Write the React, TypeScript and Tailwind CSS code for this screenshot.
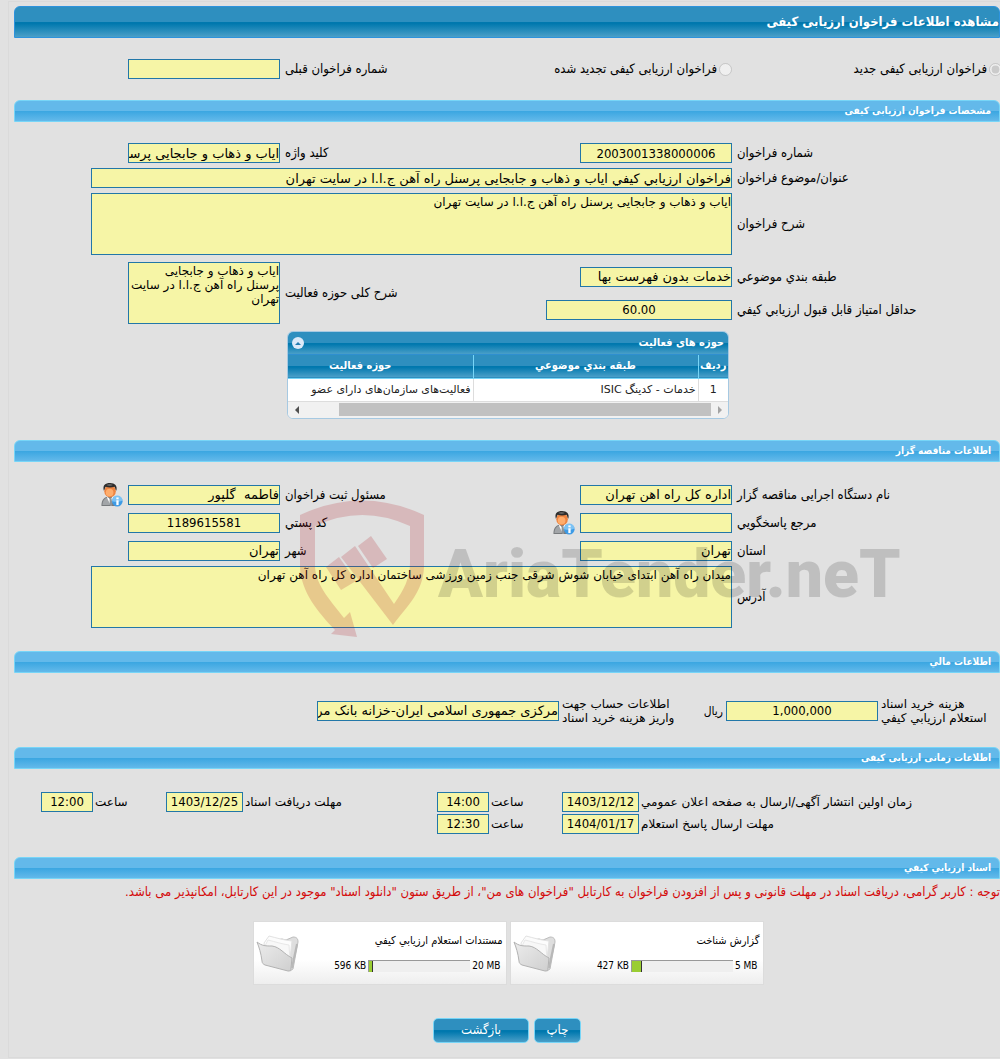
import { useId } from 'react';
import clsx from 'clsx';

const blueBar = 'bg-[linear-gradient(#2e8fbf_0%,#2e8fbf_50%,#0078ae_50%,#0078ae_55%,#4a9fc8_100%)]';
const wideFont = "font-['DejaVu_Sans',sans-serif]";
const condensedFont = "font-['DejaVu_Sans_Condensed','DejaVu_Sans',sans-serif]";

const activities = [
  { id: 1, category: 'خدمات - كدينگ ISIC', area: 'فعاليت‌هاى سازمان‌هاى داراى عضو' },
];

const documents = [
  { title: 'گزارش شناخت', used: '427 KB', max: '5 MB', percent: 10 },
  { title: 'مستندات استعلام ارزيابي کيفي', used: '596 KB', max: '20 MB', percent: 4 },
];

type FieldProps = {
  label: string;
  value?: string;
  width?: string;
  center?: boolean;
  person?: boolean;
  span?: string;
};

function PersonIcon() {
  return (
    <svg viewBox="0 0 24 25" className="h-6 w-6 shrink-0" aria-hidden="true">
      <path d="M1 24c0-6 2-9 7-10h4c5 1 6 4 6 10z" fill="#777a7d" />
      <path d="M2 23c0-4 2-7 5-8l4 8z" fill="#a2a5a8" />
      <path d="M7 14l3 3 3-3 1 2-3 8-4-8z" fill="#fff" />
      <path d="M9.500 16h2l1 7h-3z" fill="#8e9499" />
      <ellipse cx="10" cy="8.500" rx="6" ry="6.500" fill="#ee8440" />
      <ellipse cx="9.500" cy="10" rx="4" ry="4" fill="#ffad6c" />
      <path d="M3.500 8C2 2 5 0 10 0s8 3 6.500 8c-1-1-1-3-2-4-3 1-6 1-9 0-1 1-1 3-2 4z" fill="#2c2c2c" />
      <path d="M6 2c2-1 5-1 7 0-2 1-5 1-7 0z" fill="#777" />
      <circle cx="17.500" cy="19" r="5.500" fill="#3d9be6" />
      <path d="M12 19a5.500 5.500 0 0 1 11-1c-3 2-7 2-11 1z" fill="#7cc2f4" />
      <rect x="16.500" y="18" width="2.400" height="5" fill="#fff" />
      <rect x="16.500" y="15" width="2.400" height="2" fill="#fff" />
    </svg>
  );
}

function FolderIcon() {
  return (
    <svg viewBox="0 0 44 38" className="h-[38px] w-11 shrink-0" aria-hidden="true">
      <defs>
        <linearGradient id="folder" x1="0" y1="0" x2="1" y2="1">
          <stop offset="0" stopColor="#ececec" />
          <stop offset="1" stopColor="#cfcfcf" />
        </linearGradient>
      </defs>
      <path d="M9 8l17-3 4 1 7-3c4 0 5 2 5 5l-5 27-3 2z" fill="#dedede" stroke="#bdbdbd" />
      <path d="M8 9l5-7c8 2 14 4 23 5l-2 18-24-6z" fill="#fcfcfc" stroke="#e2e2e2" />
      <path d="M9 12l3-6c8 2 14 4 21 5l1 16-24-6z" fill="#f8f8f8" stroke="#e8e8e8" />
      <path d="M1 8c5 4 9 4 15 4 8 1 12 8 20 12l-1 10c0 3-1 3-3 3L9 31c-2-1-3-2-3-4C5 19 3 13 1 8z" fill="url(#folder)" stroke="#b2b2b2" />
      <path d="M36 34l2-10 3-14" stroke="#b8b8b8" strokeWidth="2" fill="none" />
    </svg>
  );
}

function TextBox({ id, value, width, center }: { id?: string; value?: string; width: string; center?: boolean }) {
  return (
    <input
      id={id}
      readOnly
      defaultValue={value}
      className={clsx(
        'h-5 shrink-0 border border-[#2277a8] bg-[#f6f5a6] text-[13px] leading-4 text-black outline-none',
        width,
        center ? clsx('text-center', condensedFont) : wideFont
      )}
    />
  );
}

function Field({ label, value, width = 'w-[152px]', center, person, span }: FieldProps) {
  const id = useId();
  return (
    <>
      <label htmlFor={id} className="text-left">{label}</label>
      <div className={clsx('flex items-center gap-1', span)}>
        <TextBox id={id} value={value} width={width} center={center} />
        {person && <PersonIcon />}
      </div>
    </>
  );
}

function Area({ label, value, width, span, row }: FieldProps & { row?: string }) {
  const id = useId();
  return (
    <>
      <label htmlFor={id} className={clsx('text-left', row)}>{label}</label>
      <textarea
        id={id}
        readOnly
        defaultValue={value}
        className={clsx('block h-[62px] resize-none overflow-hidden border border-[#2277a8] bg-[#f6f5a6] pt-px text-xs leading-[14px] text-black outline-none', wideFont, width, span, row)}
      />
    </>
  );
}

function SectionBar({ children }: { children: string }) {
  return (
    <h2 className={clsx('h-[22px] rounded-t-md border border-[#77d5f7] bg-[linear-gradient(#63b9ea_0%,#63b9ea_50%,#3aa6e1_50%,#63b9ea_100%)] px-2 text-[10px] leading-5 font-bold text-white', condensedFont)}>
      {children}
    </h2>
  );
}

const formGrid = clsx('grid grid-cols-[263px_186px_minmax(0,1fr)_266px] items-center gap-x-[5px] text-[13px] leading-[14px]', condensedFont);
const timeGrid = 'grid grid-cols-[359px_77px_69px_52px_minmax(0,1fr)_77px_69px_79px] items-center gap-x-0.5';

function ActivityTable() {
  return (
    <div className="mr-[271px] mt-[7px] w-[442px] overflow-hidden rounded-md border border-[#a6c9e2] bg-white">
      <div className={clsx('flex h-[23px] items-center justify-between border-b border-[#2f8fd0] px-1', blueBar, condensedFont)}>
        <h3 className="text-[11px] font-bold text-white">حوزه هاى فعاليت</h3>
        <button type="button" aria-label="بستن جدول" className="flex size-3 items-center justify-center rounded-full bg-[#dbe9f8]">
          <svg viewBox="0 0 8 4" className="h-[3px] w-1.5"><path d="M0 4l4-4 4 4z" fill="#217bb0" /></svg>
        </button>
      </div>
      <div className="overflow-hidden">
        <table className="w-[480px] table-fixed border-collapse">
          <colgroup>
            <col className="w-[30px]" />
            <col className="w-[225px]" />
            <col className="w-[225px]" />
          </colgroup>
          <thead>
            <tr className={clsx('h-[23px] border-b border-[#77d5f7] text-[11px] leading-4 text-white', blueBar, condensedFont)}>
              <th className="border-l border-[#77d5f7] p-0">رديف</th>
              <th className="border-l border-[#77d5f7] p-0">طبقه بندي موضوعي</th>
              <th className="p-0">حوزه فعاليت</th>
            </tr>
          </thead>
          <tbody>
            {activities.map((item) => (
              <tr key={item.id} className="h-[23px] border-b border-[#ddd] text-[11px] leading-4 text-[#222]">
                <td className="border-l border-[#ddd] p-0 text-center">{item.id}</td>
                <td className="border-l border-[#ddd] px-0.5 py-0">{item.category}</td>
                <td className="px-0.5 py-0">{item.area}</td>
              </tr>
            ))}
          </tbody>
        </table>
      </div>
      <div className="flex h-4 items-center bg-[#f1f1f1]">
        <button type="button" aria-label="راست" className="flex h-full w-[17px] items-center justify-center">
          <svg viewBox="0 0 4 8" className="h-2 w-1"><path d="M0 0l4 4-4 4z" fill="#a3a3a3" /></svg>
        </button>
        <div className="h-[13px] w-[372px] bg-[#c1c1c1]" />
        <div className="flex-1" />
        <button type="button" aria-label="چپ" className="flex h-full w-[17px] items-center justify-center">
          <svg viewBox="0 0 4 8" className="h-2 w-1"><path d="M4 0L0 4l4 4z" fill="#505050" /></svg>
        </button>
      </div>
    </div>
  );
}

function Watermark() {
  return (
    <div dir="ltr" className="pointer-events-none absolute top-[60px] left-[286px] flex items-start gap-3" aria-hidden="true">
      <svg viewBox="0 0 126 138" className="h-[138px] w-[126px] shrink-0 opacity-20">
        <g fill="#b01e28">
          <path d="M0 15Q62-14 124 15V67C123 92 108 105 93 125L41 57 55 46 94 104C104 90 110 78 110 63V26Q62 4 15 26V67C16 86 32 102 44 118L50 112 57 137 31 134 35 130C18 112 1 92 0 67z" />
          <path d="M26 67L39 57 56 81 41 90z" />
          <path d="M58 46L71 36 87 59 73 68z" />
        </g>
      </svg>
      <span className="font-['Roboto',sans-serif] text-[66px] leading-[150px] font-black text-black/15">AriaTender.neT</span>
    </div>
  );
}

export default function App() {
  return (
    <div dir="rtl" className={clsx('min-h-[1059px] overflow-hidden bg-[#e1e1e1] pl-2 text-xs leading-[14px] text-black', wideFont)}>
      <main className="mt-px border-y border-l border-[#dadada] pt-1 pb-[14px] pl-[5px]">
        <h1 className={clsx('h-8 rounded-t-md border border-[#2d93dd] text-[13px] leading-[30px] font-bold text-white', blueBar, condensedFont)}>
          مشاهده اطلاعات فراخوان ارزیابی کیفی
        </h1>

        <div className={clsx(formGrid, 'py-[21px]')}>
          <label className="-mr-0.5 flex items-center gap-0.5">
            <input type="radio" name="kind" disabled defaultChecked className="size-[13px]" />
            فراخوان ارزیابی کیفی جدید
          </label>
          <label className="flex items-center gap-0.5 whitespace-nowrap">
            <input type="radio" name="kind" disabled className="size-[13px]" />
            فراخوان ارزیابی کیفی تجدید شده
          </label>
          <Field label="شماره فراخوان قبلی" />
        </div>

        <SectionBar>مشخصات فراخوان ارزیابی کیفی</SectionBar>
        <div className={clsx(formGrid, 'gap-y-[5px] pt-[21px]')}>
          <Field label="شماره فراخوان" value="2003001338000006" center />
          <Field label="کلید واژه" value="ایاب و ذهاب و جابجایی پرسنل راه آهن" />
          <Field label="عنوان/موضوع فراخوان" value="فراخوان ارزيابي کيفي ایاب و ذهاب و جابجایی پرسنل راه آهن ج.ا.ا در سایت تهران" width="w-[641px]" span="col-span-3" />
          <Area label="شرح فراخوان" value="ایاب و ذهاب و جابجایی پرسنل راه آهن ج.ا.ا در سایت تهران" width="w-[641px]" span="col-span-3" />
        </div>
        <div className={clsx(formGrid, 'gap-y-1 pt-[7px]')}>
          <Field label="طبقه بندي موضوعي" value="خدمات بدون فهرست بها" />
          <Area label="شرح کلی حوزه فعالیت" value="ایاب و ذهاب و جابجایی پرسنل راه آهن ج.ا.ا در سایت تهران" width="w-[152px]" row="row-span-2" />
          <Field label="حداقل امتیاز قابل قبول ارزیابي کیفي" value="60.00" width="w-[186px]" center />
        </div>
        <ActivityTable />

        <div className="relative mt-[21px]">
          <SectionBar>اطلاعات مناقصه گزار</SectionBar>
          <div className={clsx(formGrid, 'auto-rows-[minmax(24px,auto)] gap-y-1 pt-[21px]')}>
            <Field label="نام دستگاه اجرایی مناقصه گزار" value="اداره کل راه اهن تهران" />
            <Field label="مسئول ثبت فراخوان" value="فاطمه  گلپور" person />
            <Field label="مرجع پاسخگویي" person />
            <Field label="کد پستي" value="1189615581" center />
            <Field label="استان" value="تهران" />
            <Field label="شهر" value="تهران" />
          </div>
          <div className={clsx(formGrid, 'pt-[3px]')}>
            <Area label="آدرس" value="میدان راه آهن ابتدای خیابان شوش شرقی جنب زمین ورزشی ساختمان اداره کل راه آهن تهران" width="w-[641px]" span="col-span-3" />
          </div>
          <Watermark />
        </div>

        <div className="mt-[23px]">
          <SectionBar>اطلاعات مالي</SectionBar>
          <div className="flex items-center pt-6 pb-[22px]">
            <label htmlFor="fee" className="w-[119px] pl-0 text-left whitespace-nowrap">
              <span className="inline-block text-right">هزینه خرید اسناد</span>
              <br />
              <span>استعلام ارزیابي کیفي</span>
            </label>
            <div className="mr-[3px] flex w-[200px] items-center gap-[3px]">
              <TextBox id="fee" value="1,000,000" width="w-[152px]" center />
              <span className={condensedFont}>ریال</span>
            </div>
            <label htmlFor="account" className="w-[116px] text-left whitespace-nowrap">
              اطلاعات حساب جهت
              <br />
              واریز هزینه خرید اسناد
            </label>
            <div className="mr-[3px]">
              <TextBox id="account" value="مرکزی جمهوری اسلامی ایران-خزانه بانک مرکزی" width="w-[242px]" />
            </div>
          </div>
        </div>

        <SectionBar>اطلاعات زمانی ارزیابی کیفی</SectionBar>
        <div className={clsx(timeGrid, 'gap-y-0.5 pt-[23px] pb-[23px]')}>
          <Field label="زمان اولین انتشار آگهی/ارسال به صفحه اعلان عمومي" value="1403/12/12" width="w-[77px]" center />
          <Field label="ساعت" value="14:00" width="w-[52px]" center />
          <Field label="مهلت دریافت اسناد" value="1403/12/25" width="w-[77px]" center />
          <Field label="ساعت" value="12:00" width="w-[52px]" center />
          <Field label="مهلت ارسال پاسخ استعلام" value="1404/01/17" width="w-[77px]" center />
          <Field label="ساعت" value="12:30" width="w-[52px]" center />
        </div>

        <SectionBar>اسناد ارزيابي کيفي</SectionBar>
        <p className={clsx('pt-[5px] text-[13px] leading-4 whitespace-nowrap text-[#d40a0a]', condensedFont)}>
          توجه : کاربر گرامی، دریافت اسناد در مهلت قانونی و پس از افزودن فراخوان به کارتابل "فراخوان های من"، از طریق ستون "دانلود اسناد" موجود در این کارتابل، امکانپذیر می باشد.
        </p>

        <div className={clsx('flex justify-center gap-[3px] pt-[21px] pl-0.5', condensedFont)}>
          {documents.map((doc) => (
            <div key={doc.title} className="flex h-16 w-[254px] items-center border border-[#dcdcdc] bg-[linear-gradient(#ffffff_0%,#ffffff_60%,#eeeeee_100%)] pr-[3px] pl-0.5">
              <div className="flex-1 text-[11px]">
                <h3>{doc.title}</h3>
                <div className="mt-3 flex items-center gap-0.5 px-0.5 text-[10px] leading-3">
                  <span dir="ltr">{doc.max}</span>
                  <div dir="ltr" className="h-3 w-[102px] border-t border-l border-[#999] bg-[#efefef]">
                    <div className="h-full border-r border-[#333] bg-[#9acd32]" style={{ width: `${doc.percent}%` }} />
                  </div>
                  <span dir="ltr">{doc.used}</span>
                </div>
              </div>
              <FolderIcon />
            </div>
          ))}
        </div>

        <div className={clsx('flex justify-center gap-[5px] pt-[33px] text-[13px] text-white', condensedFont)}>
          <button type="button" className={clsx('h-[25px] w-[47px] rounded-[5px] border border-[#77d5f7]', blueBar)}>چاپ</button>
          <button type="button" className={clsx('h-[25px] w-24 rounded-[5px] border border-[#77d5f7]', blueBar)}>بازگشت</button>
        </div>
      </main>
    </div>
  );
}
